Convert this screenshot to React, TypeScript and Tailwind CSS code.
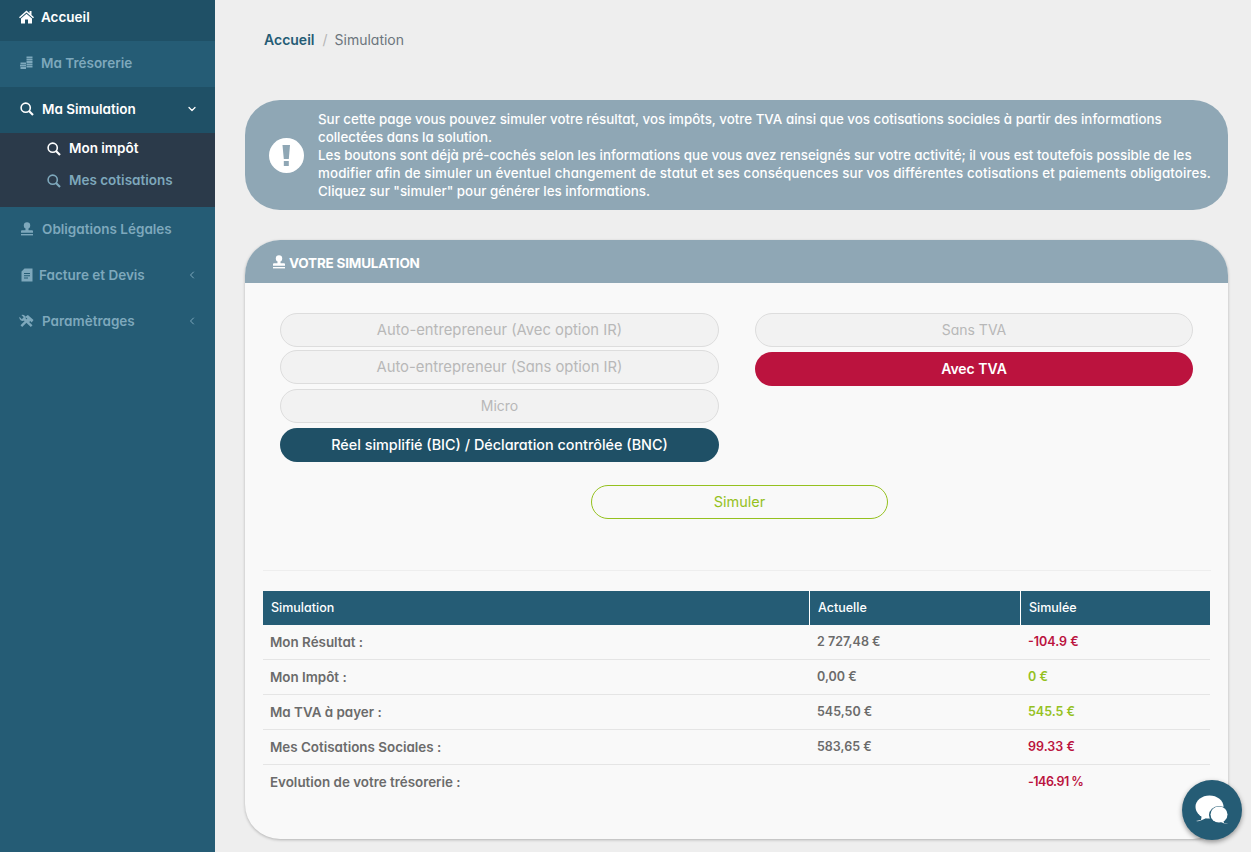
import { ChevronDown, ChevronLeft } from 'lucide-react';

const rows = [
  { label: 'Mon Résultat :', current: '2 727,48 €', simulated: '-104.9 €', color: 'text-[#bb133e]' },
  { label: 'Mon Impôt :', current: '0,00 €', simulated: '0 €', color: 'text-[#95c11f]' },
  { label: 'Ma TVA à payer :', current: '545,50 €', simulated: '545.5 €', color: 'text-[#95c11f]' },
  { label: 'Mes Cotisations Sociales :', current: '583,65 €', simulated: '99.33 €', color: 'text-[#bb133e]' },
  { label: 'Evolution de votre trésorerie :', current: '', simulated: '-146.91 %', color: 'text-[#bb133e] tracking-[-0.5px]' },
];

function HomeIcon() {
  return (
    <svg width="15" height="14" viewBox="0 0 15 14" fill="currentColor">
      <path d="M7.5 0.5 L10.5 3.2 V1 H12.5 V5 L15 7.3 L14 8.2 L7.5 2.6 L1 8.2 L0 7.3 Z" />
      <path d="M7.5 3.8 L13 8.5 V13.5 H9 V9.5 H6 V13.5 H2 V8.5 Z" />
    </svg>
  );
}

function CoinsIcon() {
  return (
    <svg width="13" height="14" viewBox="0 0 13 14" fill="currentColor">
      <path d="M6.5 0.5h6v1.8h-6zM6.5 2.8h6v1.8h-6zM6.5 5.1h6v1.8h-6zM6.5 7.4h6v1.8h-6zM6.5 9.7h6v1.8h-6z" />
      <path d="M0.5 6.5h5.5v1.8h-5.5zM0 8.8h6v1.8h-6zM0.5 11.1h5.5v1.8h-5.5z" />
    </svg>
  );
}

function StampIcon({ size = 14 }: { size?: number }) {
  return (
    <svg width={size} height={size} viewBox="0 0 14 14" fill="currentColor">
      <circle cx="7" cy="3.5" r="3.2" />
      <path d="M5.6 6h2.8 L8.6 8.2 H12 Q13 8.2 13 9.2 V10.8 H1 V9.2 Q1 8.2 2 8.2 H5.4 Z" />
      <rect x="1" y="12" width="12" height="1.4" />
    </svg>
  );
}

function FileIcon() {
  return (
    <svg width="12" height="14" viewBox="0 0 12 14" fill="currentColor">
      <path fillRule="evenodd" d="M3.5 0.5 H11.5 V13.5 H0.5 V3.5 Z M3 5 V6 H9 V5 Z M3 7.2 V8.2 H9 V7.2 Z M3 9.4 V10.4 H7 V9.4 Z" />
    </svg>
  );
}

function ToolsIcon() {
  return (
    <svg width="16" height="14" viewBox="0 0 16 14" fill="currentColor" stroke="none">
      <line x1="2.5" y1="12.5" x2="10" y2="5" stroke="currentColor" strokeWidth="2.6" />
      <line x1="13.5" y1="12.5" x2="5" y2="4.5" stroke="currentColor" strokeWidth="2.6" />
      <path d="M6.5 2.5 L9.5 0.5 L15.5 6 L13.5 8.5 L12 7 L10.5 8.5 L8 6 L9 4.5 Z" />
      <path d="M0.5 2.5 L3 5 L5 3 L2.5 0.5 A3.5 3.5 0 0 1 7 5 L5.5 6.5 A3.5 3.5 0 0 1 0.5 2.5 Z" />
    </svg>
  );
}

function SearchIcon() {
  return (
    <svg width="14" height="14" viewBox="0 0 14 14" fill="none" stroke="currentColor">
      <circle cx="5.7" cy="5.7" r="4.6" strokeWidth="1.6" />
      <line x1="9" y1="9" x2="13" y2="13" strokeWidth="2.2" />
    </svg>
  );
}

function AlertIcon() {
  return (
    <svg width="35" height="35" viewBox="0 0 35 35" className="mr-[14px] shrink-0">
      <circle cx="17.5" cy="17.5" r="17.5" fill="white" />
      <path d="M13.5 7 H21 L19.8 21 H14.8 Z" fill="#8fa7b5" />
      <rect x="14.8" y="23" width="5" height="5" fill="#8fa7b5" />
    </svg>
  );
}

function ChatIcon() {
  return (
    <svg width="34" height="30" viewBox="0 0 34 30" fill="white">
      <ellipse cx="14.5" cy="12" rx="14" ry="11.5" />
      <path d="M7 19 L6 25 L1 26 Q5 27 13 22 Z" />
      <ellipse cx="24" cy="20" rx="10" ry="9" fill="#255c75" />
      <ellipse cx="24" cy="19.5" rx="8.5" ry="8" />
      <path d="M28 24 L29 28 L33 29 Q30 29.5 24 26 Z" />
    </svg>
  );
}

function SideItem({ icon, label, active, dark, chevron, gap }: { icon: React.ReactNode; label: string; active?: boolean; dark?: boolean; chevron?: 'down' | 'left'; gap?: string }) {
  return (
    <div className={`flex h-[46px] items-center pb-[2px] pl-[19px] pr-[17px] text-[13.5px] font-semibold ${dark ? 'bg-[#1f5066]' : ''} ${active ? 'text-white' : 'text-[#7ea8bc]'}`}>
      <span className={`flex w-[15px] justify-center ${gap ?? 'mr-[8px]'}`}>{icon}</span>
      <span className="flex-1">{label}</span>
      {chevron === 'down' && <ChevronDown size={12} strokeWidth={2.5} />}
      {chevron === 'left' && <ChevronLeft size={12} strokeWidth={2} />}
    </div>
  );
}

function OptionButton({ label, mt, size }: { label: string; mt?: string; size?: string }) {
  return (
    <div className={`flex h-[34px] items-center justify-center rounded-[17px] border border-[#dddddd] bg-[#f2f2f2] text-[#b8b8b8] ${size ?? 'pb-[2px] text-[14px]'} ${mt ?? ''}`}>
      {label}
    </div>
  );
}

export default function App() {
  return (
    <div className="flex h-[852px] overflow-hidden bg-[#eeeeee] font-['Inter','Liberation_Sans',sans-serif] [font-feature-settings:'cv11']">
      <aside className="w-[215px] shrink-0 bg-[#255c75]">
        <div className="-mt-[5px]">
          <SideItem icon={<HomeIcon />} label="Accueil" active dark gap="mr-[7px]" />
          <SideItem icon={<CoinsIcon />} label="Ma Trésorerie" gap="mr-[7px]" />
          <SideItem icon={<SearchIcon />} label="Ma Simulation" active dark chevron="down" />
          <div className="h-[74px] bg-[#2b3a4a] pl-[47px] text-[13.5px] font-semibold">
            <div className="flex h-[31px] items-center gap-[8px] text-white">
              <SearchIcon />
              Mon impôt
            </div>
            <div className="flex h-[33px] items-center gap-[8px] text-[#7ea8bc]">
              <SearchIcon />
              Mes cotisations
            </div>
          </div>
          <SideItem icon={<StampIcon />} label="Obligations Légales" />
          <SideItem icon={<FileIcon />} label="Facture et Devis" gap="mr-[5px]" chevron="left" />
          <SideItem icon={<ToolsIcon />} label="Paramètrages" chevron="left" />
        </div>
      </aside>

      <main className="flex-1 pl-[30px] pr-[23px]">
        <div className="flex h-[100px] items-start pl-[19px] pt-[32px] text-[14px] leading-[16px]">
          <span className="font-semibold text-[#255c75]">Accueil</span>
          <span className="pl-[8px] pr-[7px] text-[#b5b5b5]">/</span>
          <span className="text-[#6c757d]">Simulation</span>
        </div>

        <div className="flex h-[110px] items-center rounded-[35px] bg-[#8fa7b5] pl-[24px] text-[13.35px] font-medium leading-[18px] text-white">
          <AlertIcon />
          <p className="whitespace-nowrap">
            Sur cette page vous pouvez simuler votre résultat, vos impôts, votre TVA ainsi que vos cotisations sociales à partir des informations
            <br />
            collectées dans la solution.
            <br />
            Les boutons sont déjà pré-cochés selon les informations que vous avez renseignés sur votre activité; il vous est toutefois possible de les
            <br />
            <span className="tracking-[0.11px]">modifier afin de simuler un éventuel changement de statut et ses conséquences sur vos différentes cotisations et paiements obligatoires.</span>
            <br />
            Cliquez sur "simuler" pour générer les informations.
          </p>
        </div>

        <section className="mt-[30px] h-[599px] overflow-hidden rounded-[35px] bg-[#f9f9f9] shadow-[0_1px_3px_rgba(0,0,0,0.25)]">
          <div className="flex h-[43px] items-center gap-[3px] bg-[#8fa7b5] pl-[27px] text-[13.5px] font-bold tracking-[-0.2px] text-white">
            <StampIcon />
            <span className="pt-[3px]">VOTRE SIMULATION</span>
          </div>

          <div className="grid grid-cols-[439px_438px] gap-x-[36px] pl-[35px] pt-[30px]">
            <div>
              <OptionButton label="Auto-entrepreneur (Avec option IR)" size="text-[14.8px]" />
              <OptionButton label="Auto-entrepreneur (Sans option IR)" size="text-[14.8px]" mt="mt-[3px]" />
              <OptionButton label="Micro" mt="mt-[5px]" />
              <div className="mt-[5px] flex h-[34px] items-center justify-center rounded-[17px] bg-[#1f5066] pb-[1px] text-[14.4px] font-medium text-white">
                Réel simplifié (BIC) / Déclaration contrôlée (BNC)
              </div>
            </div>
            <div>
              <OptionButton label="Sans TVA" />
              <div className="mt-[5px] flex h-[34px] items-center justify-center rounded-[17px] bg-[#bb133e] pb-[2px] text-[14px] font-semibold text-white">
                Avec TVA
              </div>
            </div>
          </div>

          <div className="mt-[23px] flex justify-center pl-[6px]">
            <div className="flex h-[34px] w-[297px] items-center justify-center rounded-[17px] border border-[#95c11f] pb-[1px] text-[14.5px] text-[#95c11f]">
              Simuler
            </div>
          </div>

          <div className="ml-[18px] mr-[17px] mt-[51px] border-t border-[#eeeeee]" />

          <table className="ml-[18px] mt-[20px] w-[947px] table-fixed border-separate border-spacing-0 text-[12.5px] font-semibold text-[#6b6b6b]">
            <thead>
              <tr className="h-[34px] bg-[#255c75] text-left text-white">
                <th className="w-[547px] border-r border-white pl-[8px] font-medium">Simulation</th>
                <th className="w-[211px] border-r border-white pl-[8px] font-medium">Actuelle</th>
                <th className="pl-[8px] font-medium">Simulée</th>
              </tr>
            </thead>
            <tbody>
              {rows.map((row, index) => {
                const border = index < rows.length - 1 ? 'border-b border-[#e5e5e5]' : '';
                return (
                  <tr key={row.label} className="h-[35px]">
                    <td className={`pl-[7px] text-[13.4px] ${border}`}>{row.label}</td>
                    <td className={`pl-[7px] ${border}`}>{row.current}</td>
                    <td className={`pl-[7px] ${row.color} ${border}`}>{row.simulated}</td>
                  </tr>
                );
              })}
            </tbody>
          </table>
        </section>
      </main>

      <div className="fixed left-[1182px] top-[780px] flex h-[60px] w-[60px] items-center justify-center rounded-full bg-[#255c75] shadow-[0_2px_5px_rgba(0,0,0,0.4)]">
        <ChatIcon />
      </div>
    </div>
  );
}
